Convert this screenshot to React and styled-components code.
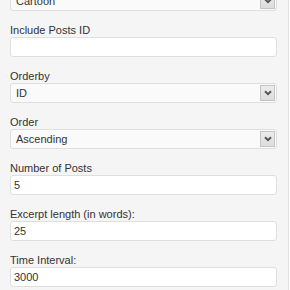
import React from 'react';
import styled, { createGlobalStyle } from 'styled-components';

const GlobalStyle = createGlobalStyle`
  html, body {
    margin: 0;
    padding: 0;
    background: #fff;
    overflow: hidden;
  }
  body {
    font-family: "Liberation Sans", Arial, sans-serif;
  }
`;

const Panel = styled.div`
  box-sizing: border-box;
  width: 289px;
  height: 300px;
  margin-top: -9px;
  padding: 0 11px 0 10px;
  background: #f5f5f5;
  border-right: 1px solid #dfdfdf;
  display: flex;
  flex-direction: column;
  gap: 11px;
`;

const Field = styled.div`
  display: flex;
  flex-direction: column;
`;

const Label = styled.label`
  display: block;
  font-size: 11px;
  line-height: 15px;
  padding-top: 1px;
  margin-bottom: -1px;
  color: #333;
`;

const TextInput = styled.input`
  box-sizing: border-box;
  width: 100%;
  height: 20px;
  margin: 0;
  padding: 0 3px;
  border: 1px solid #dfdfdf;
  border-radius: 3px;
  background: #fff;
  font-family: "Liberation Sans", Arial, sans-serif;
  font-size: 11px;
  color: #333;
  outline: none;
`;

const Select = styled.div`
  box-sizing: border-box;
  width: 100%;
  height: 20px;
  padding: 0 1px 0 5px;
  border: 1px solid #dfdfdf;
  border-radius: 3px;
  background: #fafafa;
  display: flex;
  align-items: center;
  justify-content: space-between;
  font-size: 11px;
  color: #333;
`;

const ArrowBox = styled.div`
  box-sizing: border-box;
  width: 15px;
  height: 16px;
  border: 1px solid #c4c4c4;
  background: linear-gradient(#ececec, #dcdcdc);
  display: flex;
  align-items: center;
  justify-content: center;
`;

const Chevron = () => (
  <svg width="8" height="6" viewBox="0 0 8 6">
    <path d="M1 1.2 L4 4.2 L7 1.2" fill="none" stroke="#555" strokeWidth="2" />
  </svg>
);

const Dropdown = ({ value }) => (
  <Select>
    <span>{value}</span>
    <ArrowBox>
      <Chevron />
    </ArrowBox>
  </Select>
);

const fields = [
  { label: 'Include Posts ID', type: 'text', value: '' },
  { label: 'Orderby', type: 'select', value: 'ID' },
  { label: 'Order', type: 'select', value: 'Ascending' },
  { label: 'Number of Posts', type: 'text', value: '5' },
  { label: 'Excerpt length (in words):', type: 'text', value: '25' },
  { label: 'Time Interval:', type: 'text', value: '3000' },
];

export default function App() {
  return (
    <>
      <GlobalStyle />
      <Panel>
        <Field>
          <Dropdown value="Cartoon" />
        </Field>
        {fields.map((f) => (
          <Field key={f.label}>
            <Label>{f.label}</Label>
            {f.type === 'select' ? (
              <Dropdown value={f.value} />
            ) : (
              <TextInput type="text" defaultValue={f.value} readOnly />
            )}
          </Field>
        ))}
      </Panel>
    </>
  );
}
